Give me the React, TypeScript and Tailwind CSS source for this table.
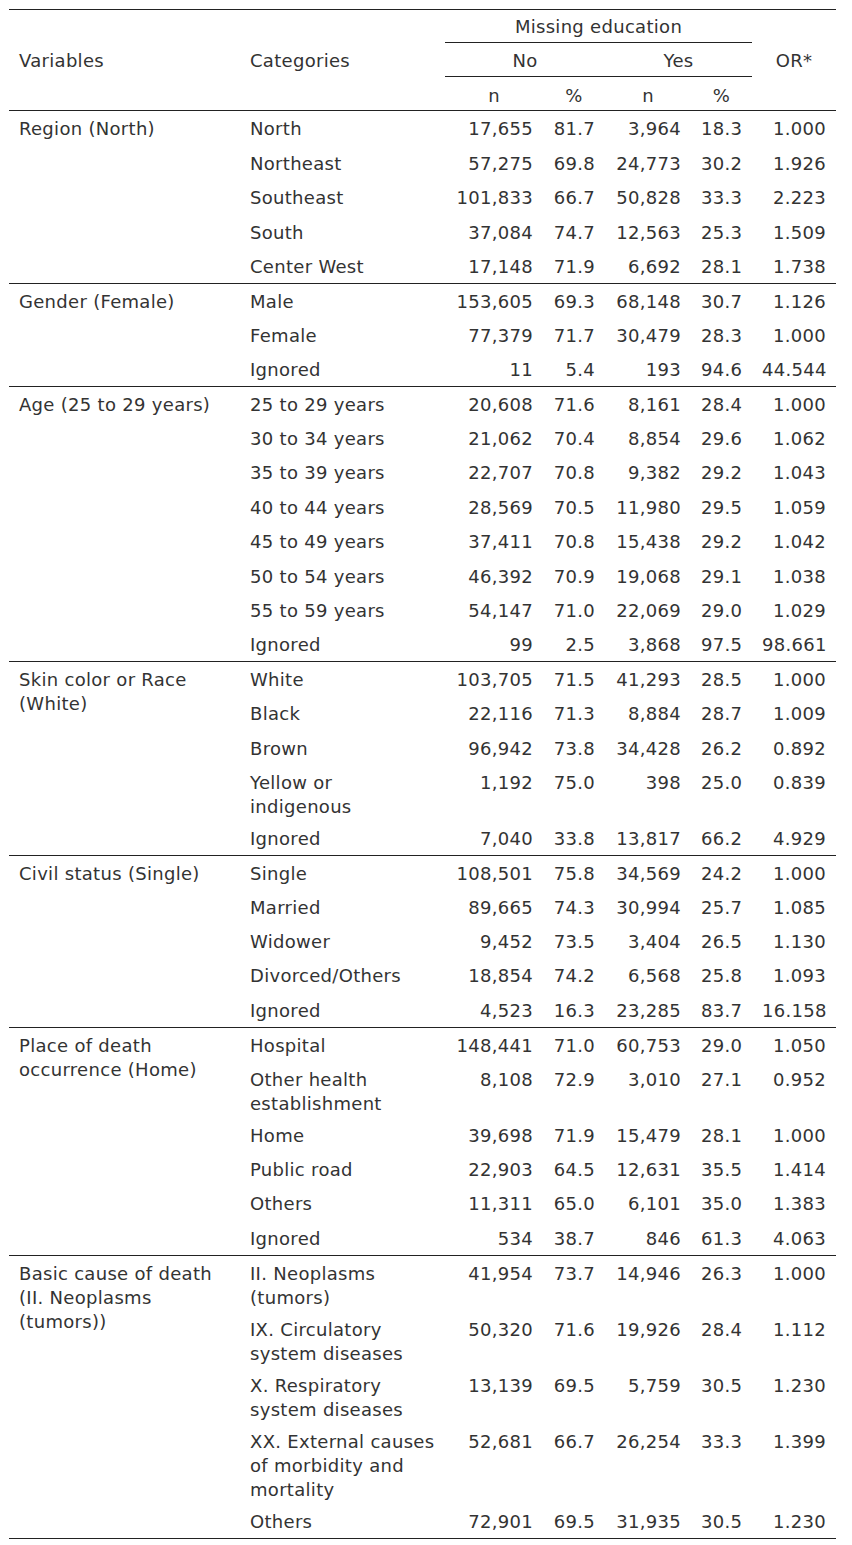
import React from "react";

type Row = { cat: string[]; v: [string, string, string, string, string] };
type Group = { name: string[]; rows: Row[] };

const groups: Group[] = [
  {
    name: ["Region (North)"],
    rows: [
      { cat: ["North"], v: ["17,655", "81.7", "3,964", "18.3", "1.000"] },
      { cat: ["Northeast"], v: ["57,275", "69.8", "24,773", "30.2", "1.926"] },
      { cat: ["Southeast"], v: ["101,833", "66.7", "50,828", "33.3", "2.223"] },
      { cat: ["South"], v: ["37,084", "74.7", "12,563", "25.3", "1.509"] },
      { cat: ["Center West"], v: ["17,148", "71.9", "6,692", "28.1", "1.738"] },
    ],
  },
  {
    name: ["Gender (Female)"],
    rows: [
      { cat: ["Male"], v: ["153,605", "69.3", "68,148", "30.7", "1.126"] },
      { cat: ["Female"], v: ["77,379", "71.7", "30,479", "28.3", "1.000"] },
      { cat: ["Ignored"], v: ["11", "5.4", "193", "94.6", "44.544"] },
    ],
  },
  {
    name: ["Age (25 to 29 years)"],
    rows: [
      { cat: ["25 to 29 years"], v: ["20,608", "71.6", "8,161", "28.4", "1.000"] },
      { cat: ["30 to 34 years"], v: ["21,062", "70.4", "8,854", "29.6", "1.062"] },
      { cat: ["35 to 39 years"], v: ["22,707", "70.8", "9,382", "29.2", "1.043"] },
      { cat: ["40 to 44 years"], v: ["28,569", "70.5", "11,980", "29.5", "1.059"] },
      { cat: ["45 to 49 years"], v: ["37,411", "70.8", "15,438", "29.2", "1.042"] },
      { cat: ["50 to 54 years"], v: ["46,392", "70.9", "19,068", "29.1", "1.038"] },
      { cat: ["55 to 59 years"], v: ["54,147", "71.0", "22,069", "29.0", "1.029"] },
      { cat: ["Ignored"], v: ["99", "2.5", "3,868", "97.5", "98.661"] },
    ],
  },
  {
    name: ["Skin color or Race", "(White)"],
    rows: [
      { cat: ["White"], v: ["103,705", "71.5", "41,293", "28.5", "1.000"] },
      { cat: ["Black"], v: ["22,116", "71.3", "8,884", "28.7", "1.009"] },
      { cat: ["Brown"], v: ["96,942", "73.8", "34,428", "26.2", "0.892"] },
      { cat: ["Yellow or", "indigenous"], v: ["1,192", "75.0", "398", "25.0", "0.839"] },
      { cat: ["Ignored"], v: ["7,040", "33.8", "13,817", "66.2", "4.929"] },
    ],
  },
  {
    name: ["Civil status (Single)"],
    rows: [
      { cat: ["Single"], v: ["108,501", "75.8", "34,569", "24.2", "1.000"] },
      { cat: ["Married"], v: ["89,665", "74.3", "30,994", "25.7", "1.085"] },
      { cat: ["Widower"], v: ["9,452", "73.5", "3,404", "26.5", "1.130"] },
      { cat: ["Divorced/Others"], v: ["18,854", "74.2", "6,568", "25.8", "1.093"] },
      { cat: ["Ignored"], v: ["4,523", "16.3", "23,285", "83.7", "16.158"] },
    ],
  },
  {
    name: ["Place of death", "occurrence (Home)"],
    rows: [
      { cat: ["Hospital"], v: ["148,441", "71.0", "60,753", "29.0", "1.050"] },
      { cat: ["Other health", "establishment"], v: ["8,108", "72.9", "3,010", "27.1", "0.952"] },
      { cat: ["Home"], v: ["39,698", "71.9", "15,479", "28.1", "1.000"] },
      { cat: ["Public road"], v: ["22,903", "64.5", "12,631", "35.5", "1.414"] },
      { cat: ["Others"], v: ["11,311", "65.0", "6,101", "35.0", "1.383"] },
      { cat: ["Ignored"], v: ["534", "38.7", "846", "61.3", "4.063"] },
    ],
  },
  {
    name: ["Basic cause of death", "(II. Neoplasms", "(tumors))"],
    rows: [
      { cat: ["II. Neoplasms", "(tumors)"], v: ["41,954", "73.7", "14,946", "26.3", "1.000"] },
      { cat: ["IX. Circulatory", "system diseases"], v: ["50,320", "71.6", "19,926", "28.4", "1.112"] },
      { cat: ["X. Respiratory", "system diseases"], v: ["13,139", "69.5", "5,759", "30.5", "1.230"] },
      { cat: ["XX. External causes", "of morbidity and", "mortality"], v: ["52,681", "66.7", "26,254", "33.3", "1.399"] },
      { cat: ["Others"], v: ["72,901", "69.5", "31,935", "30.5", "1.230"] },
    ],
  },
];

function Lines({ lines }: { lines: string[] }) {
  return (
    <>
      {lines.map((l, i) => (
        <div key={i} className="whitespace-nowrap">
          {l}
        </div>
      ))}
    </>
  );
}

export default function App() {
  return (
    <div className="bg-white w-[852px] min-h-[1545px] pt-[9px] pl-[9px]">
      <table
        className="table-fixed border-collapse w-[827px] text-[#333] text-[18px] leading-[24px] tracking-[0.3px]"
        style={{ fontFamily: '"DejaVu Sans", Verdana, sans-serif' }}
      >
        <colgroup>
          <col className="w-[231px]" />
          <col className="w-[205px]" />
          <col className="w-[98px]" />
          <col className="w-[62px]" />
          <col className="w-[86px]" />
          <col className="w-[61px]" />
          <col className="w-[84px]" />
        </colgroup>
        <thead>
          <tr className="border-t border-[#222] h-[32px]">
            <th rowSpan={3} className="font-normal text-left align-middle px-[10px] pt-[1px] pb-0 border-b border-[#222]">
              Variables
            </th>
            <th rowSpan={3} className="font-normal text-left align-middle px-[10px] pt-[1px] pb-0 border-b border-[#222]">
              Categories
            </th>
            <th colSpan={4} className="font-normal text-center pt-[5px] pb-[3px] px-0 border-b border-[#222]">
              Missing education
            </th>
            <th rowSpan={3} className="font-normal text-center align-middle px-[10px] pt-[1px] pb-0 border-b border-[#222]">
              OR*
            </th>
          </tr>
          <tr className="h-[33px]">
            <th colSpan={2} className="font-normal text-center pt-[6px] pb-[3px] border-b border-[#222]">
              No
            </th>
            <th colSpan={2} className="font-normal text-center pt-[6px] pb-[3px] border-b border-[#222]">
              Yes
            </th>
          </tr>
          <tr className="h-[33px]">
            <th className="font-normal text-center pt-[7px] pb-[2px] border-b border-[#222]">n</th>
            <th className="font-normal text-center pt-[7px] pb-[2px] border-b border-[#222]">%</th>
            <th className="font-normal text-center pt-[7px] pb-[2px] border-b border-[#222]">n</th>
            <th className="font-normal text-center pt-[7px] pb-[2px] border-b border-[#222]">%</th>
          </tr>
        </thead>
        <tbody>
          {groups.map((g, gi) =>
            g.rows.map((r, ri) => (
              <tr
                key={gi + "-" + ri}
                className={
                  (gi === 0 && ri === 0 ? "h-[35.4px] " : "h-[34.4px] ") +
                  (ri === g.rows.length - 1 ? "border-b border-[#222]" : "")
                }
              >
                {ri === 0 && (
                  <td rowSpan={g.rows.length} className="align-top text-left px-[10px] pt-[6px] pb-[2px]">
                    <Lines lines={g.name} />
                  </td>
                )}
                <td className="align-top text-left px-[10px] pt-[6px] pb-[2px]">
                  <Lines lines={r.cat} />
                </td>
                {r.v.map((x, xi) => (
                  <td key={xi} className="align-top text-right px-[10px] pt-[6px] pb-[2px] whitespace-nowrap">
                    {x}
                  </td>
                ))}
              </tr>
            ))
          )}
        </tbody>
      </table>
    </div>
  );
}
